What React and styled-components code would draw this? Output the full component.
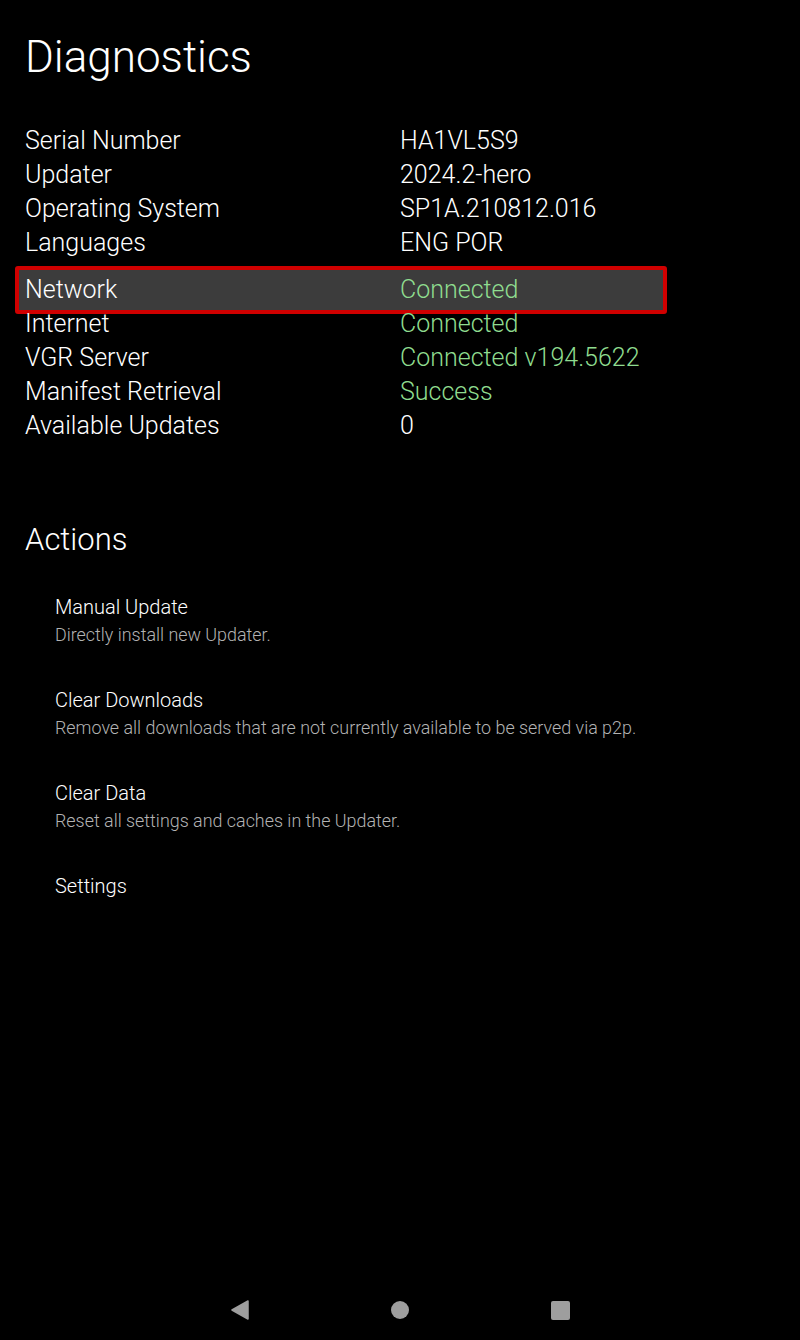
import React from 'react';
import styled, { createGlobalStyle } from 'styled-components';

const diagnostics = [
  { label: 'Serial Number', value: 'HA1VL5S9' },
  { label: 'Updater', value: '2024.2-hero' },
  { label: 'Operating System', value: 'SP1A.210812.016' },
  { label: 'Languages', value: 'ENG POR' },
  { label: 'Network', value: 'Connected', ok: true, focused: true },
  { label: 'Internet', value: 'Connected', ok: true },
  { label: 'VGR Server', value: 'Connected v194.5622', ok: true },
  { label: 'Manifest Retrieval', value: 'Success', ok: true },
  { label: 'Available Updates', value: '0' },
];

const actions = [
  { title: 'Manual Update', desc: 'Directly install new Updater.' },
  { title: 'Clear Downloads', desc: 'Remove all downloads that are not currently available to be served via p2p.' },
  { title: 'Clear Data', desc: 'Reset all settings and caches in the Updater.' },
  { title: 'Settings' },
];

const App = () => {
  return (
    <Screen>
      <GlobalStyle />
      <Content>
        <Title>Diagnostics</Title>
        <InfoList>
          {diagnostics.map((d) => (
            <InfoRow key={d.label} $focused={d.focused}>
              <Label>{d.label}</Label>
              <Value $ok={d.ok}>{d.value}</Value>
            </InfoRow>
          ))}
        </InfoList>

        <SectionTitle>Actions</SectionTitle>
        <ActionList>
          {actions.map((a) => (
            <Action key={a.title}>
              <ActionTitle>{a.title}</ActionTitle>
              {a.desc && <ActionDesc>{a.desc}</ActionDesc>}
            </Action>
          ))}
        </ActionList>
      </Content>

      <NavBar>
        <NavButton>
          <svg width="18" height="20" viewBox="0 0 18 20">
            <path d="M17 1 L1 10 L17 19 Z" fill="#9e9e9e" stroke="#9e9e9e" strokeWidth="1.5" strokeLinejoin="round" />
          </svg>
        </NavButton>
        <NavButton>
          <svg width="18" height="18" viewBox="0 0 18 18">
            <circle cx="9" cy="9" r="9" fill="#9e9e9e" />
          </svg>
        </NavButton>
        <NavButton>
          <svg width="19" height="19" viewBox="0 0 19 19">
            <rect x="0" y="0" width="19" height="19" rx="2" fill="#9e9e9e" />
          </svg>
        </NavButton>
      </NavBar>
    </Screen>
  );
};

export default App;

const GlobalStyle = createGlobalStyle`
  html, body {
    margin: 0;
    padding: 0;
    background: #000;
  }
  body {
    font-family: Roboto, "Noto Sans", sans-serif;
    color: #fff;
  }
`;

const Screen = styled.div`
  min-height: 100vh;
  display: flex;
  flex-direction: column;
  background: #000;
`;

const Content = styled.div`
  flex: 1;
  padding: 30px 0 0 25px;
`;

const Title = styled.div`
  font-size: 44px;
  font-weight: 300;
  line-height: 54px;
`;

const InfoList = styled.div`
  width: 632px;
  margin-top: 40px;
`;

const InfoRow = styled.div`
  display: grid;
  grid-template-columns: 375px 1fr;
  height: 34px;
  align-items: center;
  ${({ $focused }) =>
    $focused &&
    `
    margin: 6px -10px -7px -10px;
    padding: 3px 6px;
    border: 4px solid #d00000;
    border-radius: 3px;
    background: #3c3c3c;
  `}
`;

const Label = styled.div`
  font-size: 25px;
  font-weight: 300;
  line-height: 34px;
  white-space: nowrap;
`;

const Value = styled(Label)`
  color: ${({ $ok }) => ($ok ? '#8fdc8f' : '#fff')};
`;

const SectionTitle = styled.div`
  margin-top: 77px;
  font-size: 31px;
  font-weight: 300;
  line-height: 40px;
`;

const ActionList = styled.div`
  margin-top: 35px;
  padding-left: 30px;
  display: flex;
  flex-direction: column;
  gap: 41px;
`;

const Action = styled.div`
  display: flex;
  flex-direction: column;
`;

const ActionTitle = styled.div`
  font-size: 20px;
  font-weight: 300;
  line-height: 25px;
`;

const ActionDesc = styled.div`
  margin-top: 2px;
  font-size: 17.9px;
  font-weight: 300;
  line-height: 25px;
  color: #b3b3b3;
  white-space: nowrap;
`;

const NavBar = styled.div`
  height: 60px;
  display: flex;
  justify-content: center;
  align-items: center;
  gap: 120px;
`;

const NavButton = styled.div`
  width: 40px;
  display: flex;
  justify-content: center;
  align-items: center;
`;
